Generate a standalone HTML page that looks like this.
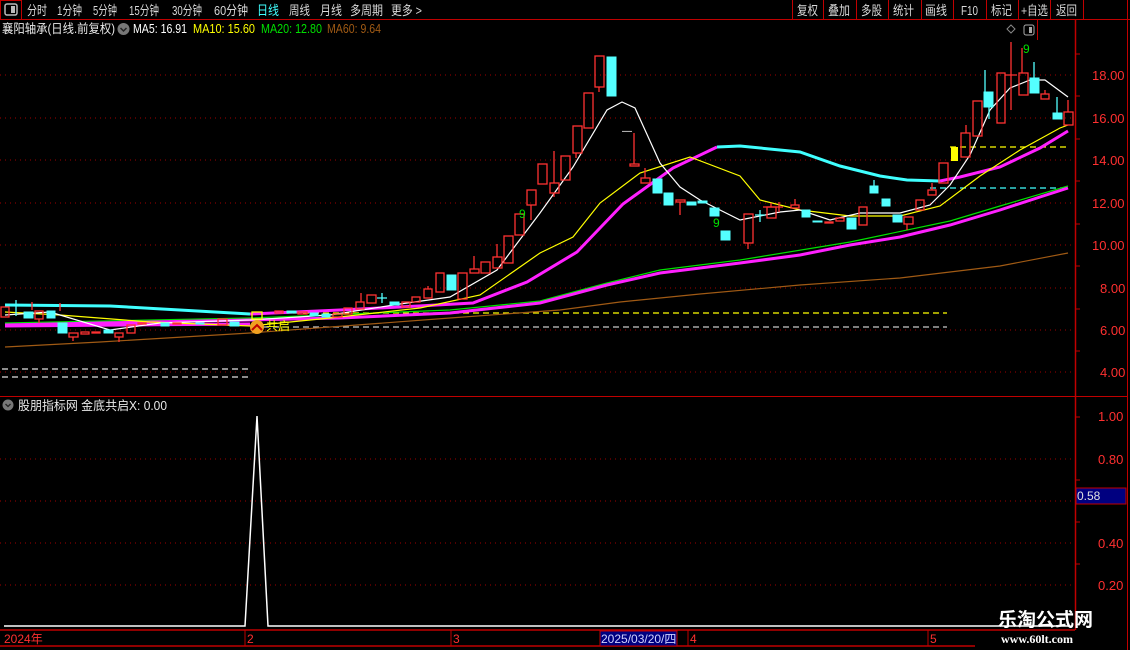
<!DOCTYPE html>
<html><head><meta charset="utf-8"><style>
body{margin:0;background:#000;width:1130px;height:650px;overflow:hidden;font-family:"Liberation Sans","Noto Sans CJK SC",sans-serif}
svg{position:absolute;left:0;top:0}
</style></head><body>
<svg width="1130" height="650" viewBox="0 0 1130 650" xmlns="http://www.w3.org/2000/svg" font-family="Liberation Sans, Noto Sans CJK SC, sans-serif">
<line x1="0" y1="19.5" x2="1130" y2="19.5" stroke="#c00000"/>
<rect x="0.5" y="0.5" width="21" height="19" fill="none" stroke="#c00000"/>
<rect x="5" y="4" width="12" height="11" rx="2" fill="none" stroke="#bbb" stroke-width="1.5"/><rect x="11" y="6" width="4" height="7" fill="#bbb"/>
<g fill="#d8d8d8" font-size="13" lengthAdjust="spacingAndGlyphs">
<text x="27" y="15" textLength="20" lengthAdjust="spacingAndGlyphs">分时</text><text x="57" y="15" textLength="25" lengthAdjust="spacingAndGlyphs">1分钟</text><text x="93" y="15" textLength="24" lengthAdjust="spacingAndGlyphs">5分钟</text><text x="129" y="15" textLength="30" lengthAdjust="spacingAndGlyphs">15分钟</text><text x="172" y="15" textLength="30" lengthAdjust="spacingAndGlyphs">30分钟</text><text x="214" y="15" textLength="34" lengthAdjust="spacingAndGlyphs">60分钟</text>
<text x="257" y="15" fill="#40ffff" textLength="22" lengthAdjust="spacingAndGlyphs">日线</text><text x="289" y="15" textLength="21" lengthAdjust="spacingAndGlyphs">周线</text><text x="320" y="15" textLength="22" lengthAdjust="spacingAndGlyphs">月线</text><text x="350" y="15" textLength="33" lengthAdjust="spacingAndGlyphs">多周期</text><text x="391" y="15" textLength="31" lengthAdjust="spacingAndGlyphs">更多 &gt;</text>
<text x="797" y="15" textLength="21" lengthAdjust="spacingAndGlyphs">复权</text><text x="828" y="15" textLength="22" lengthAdjust="spacingAndGlyphs">叠加</text><text x="861" y="15" textLength="21" lengthAdjust="spacingAndGlyphs">多股</text><text x="893" y="15" textLength="21" lengthAdjust="spacingAndGlyphs">统计</text><text x="925" y="15" textLength="22" lengthAdjust="spacingAndGlyphs">画线</text><text x="961" y="15" textLength="17" lengthAdjust="spacingAndGlyphs">F10</text><text x="991" y="15" textLength="21" lengthAdjust="spacingAndGlyphs">标记</text><text x="1021" y="15" textLength="27" lengthAdjust="spacingAndGlyphs">+自选</text><text x="1056" y="15" textLength="21" lengthAdjust="spacingAndGlyphs">返回</text>
</g>
<g stroke="#c00000"><line x1="792.5" y1="0" x2="792.5" y2="19"/><line x1="823.5" y1="0" x2="823.5" y2="19"/><line x1="856.5" y1="0" x2="856.5" y2="19"/><line x1="888.5" y1="0" x2="888.5" y2="19"/><line x1="921.5" y1="0" x2="921.5" y2="19"/><line x1="953.5" y1="0" x2="953.5" y2="19"/><line x1="986.5" y1="0" x2="986.5" y2="19"/><line x1="1018.5" y1="0" x2="1018.5" y2="19"/><line x1="1050.5" y1="0" x2="1050.5" y2="19"/><line x1="1083.5" y1="0" x2="1083.5" y2="19"/><line x1="1127.5" y1="0" x2="1127.5" y2="650"/></g>
<g font-size="12.5"><text x="2" y="33" fill="#e8e8e8" textLength="113" lengthAdjust="spacingAndGlyphs">襄阳轴承(日线.前复权)</text>
<circle cx="123.5" cy="29" r="6" fill="#777"/><path d="M120.5 28l3 3 3-3" stroke="#222" stroke-width="1.5" fill="none"/>
<text x="133" y="33" fill="#fff" textLength="54" lengthAdjust="spacingAndGlyphs">MA5: 16.91</text><text x="193" y="33" fill="#ffff00" textLength="62" lengthAdjust="spacingAndGlyphs">MA10: 15.60</text><text x="261" y="33" fill="#00e000" textLength="61" lengthAdjust="spacingAndGlyphs">MA20: 12.80</text><text x="327" y="33" fill="#a05a14" textLength="54" lengthAdjust="spacingAndGlyphs">MA60: 9.64</text></g>
<path d="M1011 25l4 4-4 4-4-4z" fill="none" stroke="#888"/><rect x="1024" y="25" width="10" height="10" rx="2" fill="none" stroke="#aaa"/><rect x="1029" y="27" width="3" height="6" fill="#aaa"/>
<line x1="1037.5" y1="20" x2="1037.5" y2="40" stroke="#c00000"/>
<line x1="1075.5" y1="20" x2="1075.5" y2="630" stroke="#c00000" stroke-width="1.5"/>
<line x1="0" y1="396.5" x2="1127" y2="396.5" stroke="#c00000"/>
<g stroke="#a00000" stroke-dasharray="1 4">
<line x1="0" y1="75" x2="1073" y2="75"/><line x1="0" y1="118" x2="1073" y2="118"/><line x1="0" y1="160" x2="1073" y2="160"/><line x1="0" y1="203" x2="1073" y2="203"/><line x1="0" y1="245" x2="1073" y2="245"/><line x1="0" y1="288" x2="1073" y2="288"/><line x1="0" y1="330" x2="1073" y2="330"/><line x1="0" y1="372" x2="1073" y2="372"/>
<line x1="0" y1="459" x2="1073" y2="459"/><line x1="0" y1="501" x2="1073" y2="501"/><line x1="0" y1="543" x2="1073" y2="543"/><line x1="0" y1="585" x2="1073" y2="585"/></g>
<g fill="#ff3030" font-size="13"><text x="1092" y="80">18.00</text><text x="1092" y="123">16.00</text><text x="1092" y="165">14.00</text><text x="1092" y="208">12.00</text><text x="1092" y="250">10.00</text><text x="1100" y="293">8.00</text><text x="1100" y="335">6.00</text><text x="1100" y="377">4.00</text>
<text x="1098" y="421">1.00</text><text x="1098" y="464">0.80</text><text x="1098" y="548">0.40</text><text x="1098" y="590">0.20</text></g>
<g stroke="#c00000"><line x1="1076" y1="54" x2="1080" y2="54"/><line x1="1076" y1="96" x2="1080" y2="96"/><line x1="1076" y1="139" x2="1080" y2="139"/><line x1="1076" y1="181" x2="1080" y2="181"/><line x1="1076" y1="224" x2="1080" y2="224"/><line x1="1076" y1="266" x2="1080" y2="266"/><line x1="1076" y1="309" x2="1080" y2="309"/><line x1="1076" y1="351" x2="1080" y2="351"/><line x1="1076" y1="417" x2="1080" y2="417"/><line x1="1076" y1="480" x2="1080" y2="480"/><line x1="1076" y1="522" x2="1080" y2="522"/><line x1="1076" y1="564" x2="1080" y2="564"/></g>
<rect x="1076" y="488" width="50" height="16" fill="#000080" stroke="#c00000"/><text x="1077" y="500" fill="#e0e0e0" font-size="12">0.58</text>
<g stroke-dasharray="6 4" stroke-width="1.2">
<line x1="253" y1="313" x2="947" y2="313" stroke="#ffff00"/><line x1="253" y1="327" x2="947" y2="327" stroke="#c8c8c8"/>
<line x1="2" y1="369" x2="248" y2="369" stroke="#e0e0e0"/><line x1="2" y1="377" x2="248" y2="377" stroke="#e0e0e0"/>
<line x1="950" y1="147" x2="1070" y2="147" stroke="#ffff00"/><line x1="930" y1="188" x2="1070" y2="188" stroke="#40ffff"/></g>
<polyline fill="none" stroke="#a05a14" stroke-width="1.2" points="5,347 100,342 250,333 450,318 560,310 620,302 700,294 800,285 900,278 1000,266 1068,253"/>
<polyline fill="none" stroke="#00e000" stroke-width="1.2" points="5,323 250,318 450,310 540,301 607,283 660,270 740,260 850,242 950,221 1000,206 1068,186"/>
<polyline fill="none" stroke="#ff20ff" stroke-width="3" points="5,325 100,323 250,320 340,318 450,313 540,303 607,285 660,273 740,263 800,255 850,245 900,237 950,225 1000,210 1040,197 1068,188"/>
<polyline fill="none" stroke="#40ffff" stroke-width="3" points="5,305 110,306 250,314"/>
<polyline fill="none" stroke="#ff20ff" stroke-width="3" points="5,326 250,324"/>
<polyline fill="none" stroke="#ff20ff" stroke-width="3" points="250,314 340,310 400,307 473,303 527,282 577,252 623,204 673,168 717,147"/>
<polyline fill="none" stroke="#40ffff" stroke-width="3" points="717,147 740,146 800,152 840,166 880,176 907,180 940,181"/>
<polyline fill="none" stroke="#ff20ff" stroke-width="3" points="940,181 960,177 1000,167 1040,148 1068,131"/>
<polyline fill="none" stroke="#ffff00" stroke-width="1.2" points="5,312 60,315 150,322 250,326 330,318 420,308 480,295 540,253 573,237 600,203 640,173 690,157 740,176 760,200 800,210 850,216 900,216 940,206 980,176 1020,150 1060,128 1068,125"/>
<polyline fill="none" stroke="#ffffff" stroke-width="1.2" points="5,315 50,312 110,330 160,323 250,320 330,315 400,304 450,297 497,270 540,213 573,167 607,110 622,102 635,108 660,163 680,187 700,200 740,220 780,212 800,210 830,220 860,213 900,213 930,205 950,185 970,155 990,110 1010,88 1030,80 1045,80 1068,97"/>
<g fill="none" stroke="#ff3232" stroke-width="1.3">
<rect x="1" y="307" width="8" height="10"/><rect x="35" y="311" width="8" height="8"/><rect x="69" y="333" width="9" height="4"/><rect x="81" y="332" width="8" height="2"/><rect x="92" y="332" width="8" height="1"/><rect x="115" y="333" width="8" height="4"/><rect x="127" y="325" width="8" height="8"/><rect x="138" y="323" width="8" height="1"/><rect x="173" y="323" width="8" height="1"/><rect x="218" y="319" width="9" height="6"/><rect x="275" y="311" width="8" height="2"/><rect x="298" y="312" width="9" height="2"/><rect x="333" y="314" width="9" height="3"/><rect x="344" y="308" width="8" height="6"/><rect x="356" y="302" width="8" height="7"/><rect x="367" y="295" width="9" height="8"/><rect x="402" y="302" width="8" height="5"/><rect x="412" y="297" width="8" height="5"/>
<rect x="424" y="289" width="8" height="9"/><rect x="436" y="273" width="8" height="19"/><rect x="458" y="273" width="9" height="26"/><rect x="470" y="269" width="9" height="4"/><rect x="481" y="262" width="9" height="11"/><rect x="493" y="257" width="9" height="11"/><rect x="504" y="236" width="9" height="27"/><rect x="515" y="214" width="9" height="21"/><rect x="527" y="190" width="9" height="15"/><rect x="538" y="164" width="9" height="20"/><rect x="550" y="183" width="9" height="10"/><rect x="561" y="156" width="9" height="24"/><rect x="573" y="126" width="9" height="27"/><rect x="584" y="93" width="9" height="35"/><rect x="595" y="56" width="9" height="31"/>
<rect x="630" y="164" width="9" height="2"/><rect x="641" y="178" width="9" height="5"/><rect x="676" y="200" width="9" height="2"/><rect x="744" y="214" width="9" height="29"/><rect x="767" y="207" width="9" height="11"/><rect x="791" y="205" width="8" height="3"/><rect x="825" y="222" width="8" height="1"/><rect x="836" y="218" width="8" height="3"/><rect x="859" y="207" width="8" height="18"/><rect x="904" y="217" width="9" height="7"/><rect x="916" y="200" width="8" height="10"/><rect x="928" y="190" width="8" height="5"/><rect x="939" y="163" width="9" height="20"/><rect x="961" y="133" width="9" height="24"/><rect x="973" y="101" width="9" height="35"/><rect x="997" y="73" width="8" height="50"/><rect x="1019" y="73" width="9" height="22"/><rect x="1041" y="94" width="8" height="5"/><rect x="1064" y="112" width="9" height="13"/>
<path d="M32 302v8M60 303v8M39 319v4M73 337v4M119 337v5M361 293v9M428 286v3M474 256v13M497 244v13M531 205v15M554 151v32M554 193v4M576 153v5M599 87v5M634 133v31M645 168v10M680 202v13M748 243v6M771 203v4M795 199v6M907 224v6M932 183v7M966 125v8M1011 42v68M1005 75h12M1022 48v25M1045 90v4M1068 100v12M763 207h20M779 202v10"/>
</g>
<g fill="#54ffff" stroke="#54ffff">
<rect x="24" y="312" width="9" height="6"/><rect x="47" y="311" width="8" height="7"/><rect x="58" y="323" width="9" height="10"/><rect x="104" y="330" width="9" height="3"/><rect x="161" y="323" width="8" height="3"/><rect x="196" y="323" width="8" height="1"/><rect x="230" y="322" width="9" height="4"/><rect x="287" y="311" width="9" height="2"/><rect x="310" y="313" width="8" height="3"/><rect x="322" y="314" width="8" height="3"/><rect x="390" y="302" width="9" height="3"/>
<rect x="447" y="275" width="9" height="15"/><rect x="607" y="57" width="9" height="39"/><rect x="653" y="179" width="9" height="14"/><rect x="664" y="193" width="9" height="12"/><rect x="687" y="202" width="9" height="3"/><rect x="698" y="201" width="9" height="2"/><rect x="710" y="208" width="9" height="8"/><rect x="721" y="231" width="9" height="9"/><rect x="802" y="210" width="8" height="7"/><rect x="813" y="221" width="9" height="1"/><rect x="847" y="218" width="9" height="11"/><rect x="870" y="186" width="8" height="7"/><rect x="882" y="199" width="8" height="7"/><rect x="893" y="215" width="9" height="7"/><rect x="984" y="92" width="9" height="15"/><rect x="1030" y="78" width="9" height="15"/><rect x="1053" y="113" width="9" height="6"/>
<path d="M16 300v16M382 293v10M377 298h10M760 210v12M755 215h10M874 180v6M985 70v22M989 107v12M1034 62v16M1057 97v16" fill="none" stroke-width="1.3"/>
</g>
<rect x="252" y="312" width="10" height="7" fill="none" stroke="#ffff00" stroke-width="1.3"/>
<rect x="951" y="147" width="7" height="14" fill="#ffff00"/>
<text x="622" y="134" fill="#fff" font-size="10">—</text>
<g fill="#00e000" font-size="12"><text x="519" y="218">9</text><text x="713" y="227">9</text><text x="1023" y="53">9</text></g>
<circle cx="257" cy="327" r="7" fill="#f0a020"/><path d="M252 330l5-5 5 5" stroke="#c00000" stroke-width="2" fill="none"/>
<text x="266" y="330" fill="#ffff00" font-size="12">共启</text>
<circle cx="8" cy="405" r="5.5" fill="#777"/><path d="M5.5 404l2.5 2.5 2.5-2.5" stroke="#222" stroke-width="1.3" fill="none"/>
<text x="18" y="410" fill="#e8e8e8" font-size="12.5" textLength="149" lengthAdjust="spacingAndGlyphs">股朋指标网 金底共启X: 0.00</text>
<polyline fill="none" stroke="#fff" stroke-width="1.5" points="4,626 245,626 257,416 268,626 1070,626"/>
<line x1="0" y1="630" x2="1075" y2="630" stroke="#c00000" stroke-width="1.5"/>
<line x1="0" y1="646" x2="975" y2="646" stroke="#c00000" stroke-width="1.5"/>
<g stroke="#c00000"><line x1="245" y1="630" x2="245" y2="646"/><line x1="451" y1="630" x2="451" y2="646"/><line x1="688" y1="630" x2="688" y2="646"/><line x1="928" y1="630" x2="928" y2="646"/></g>
<g fill="#ff3030" font-size="12"><text x="4" y="643">2024年</text><text x="247" y="643">2</text><text x="453" y="643">3</text><text x="690" y="643">4</text><text x="930" y="643">5</text></g>
<rect x="600" y="631" width="77" height="15" fill="#000080" stroke="#c00000"/><text x="601" y="643" fill="#d0d0ff" font-size="12">2025/03/20/四</text>
<text x="998" y="626" fill="#fff" font-size="19" font-weight="bold" font-family="Noto Sans CJK SC, sans-serif">乐淘公式网</text>
<text x="1001" y="643" fill="#fff" font-size="12" font-weight="bold" font-family="Liberation Serif, serif">www.60lt.com</text>
</svg>
</body></html>
